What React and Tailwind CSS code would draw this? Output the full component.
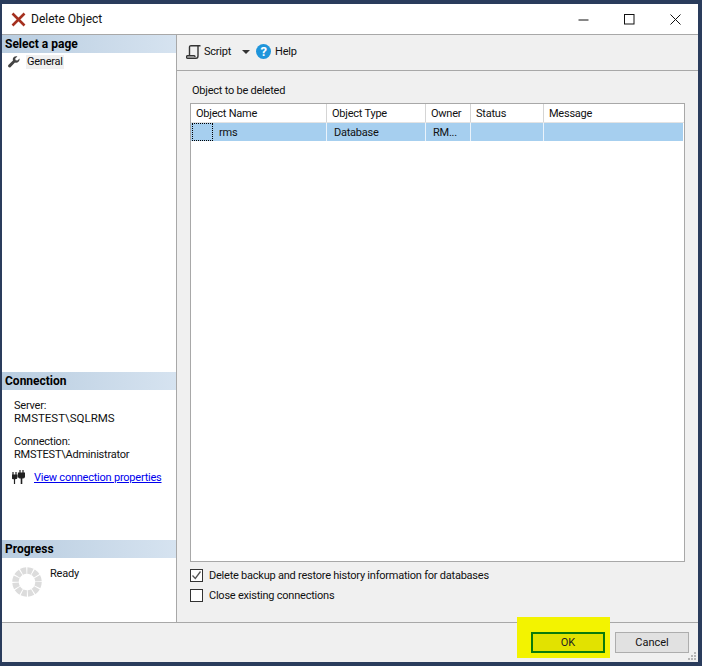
import React from 'react';

const font = "[font-family:Roboto,'Liberation_Sans',Arial,sans-serif]";

const columns = [
  { label: 'Object Name', width: 'w-[136px]', value: 'rms' },
  { label: 'Object Type', width: 'w-[99px]', value: 'Database' },
  { label: 'Owner', width: 'w-[45px]', value: 'RM...' },
  { label: 'Status', width: 'w-[73px]', value: '' },
  { label: 'Message', width: 'flex-1', value: '' },
];

function DeleteIcon() {
  return (
    <svg width="15" height="15" viewBox="0 0 15 15" className="shrink-0">
      <path d="M1.5 1.5 13.5 13.5M13.5 1.5 1.5 13.5" stroke="#a5301f" strokeWidth="2.6" />
    </svg>
  );
}

function WindowControls() {
  return (
    <div className="flex items-center ml-auto">
      <svg width="11" height="11" viewBox="0 0 11 11" className="mr-[35px]">
        <path d="M0.5 6h10" stroke="#111" strokeWidth="1" />
      </svg>
      <svg width="11" height="11" viewBox="0 0 11 11" className="mr-[35px]">
        <rect x="0.5" y="0.5" width="9.5" height="9.5" fill="none" stroke="#111" strokeWidth="1" />
      </svg>
      <svg width="11" height="11" viewBox="0 0 11 11" className="mr-[17px]">
        <path d="M0.5 0.5 10.5 10.5M10.5 0.5 0.5 10.5" stroke="#111" strokeWidth="1" />
      </svg>
    </div>
  );
}

function WrenchIcon() {
  return (
    <svg width="12" height="12" viewBox="0 0 12 12" className="shrink-0">
      <path
        d="M11.6 2.6 9.4 4.6 7.6 4.2 7.2 2.6 9.4.5C7.6-.2 5.6.6 5 2.2c-.3.8-.2 1.6 0 2.3L.6 8.8c-.7.7-.7 1.6-.1 2.2.6.6 1.5.6 2.2-.1L7 6.6c2.2.8 4.9-1 4.6-4Z"
        fill="#444"
      />
    </svg>
  );
}

function ScriptIcon() {
  return (
    <svg width="15" height="14" viewBox="0 0 15 14" className="shrink-0">
      <path
        d="M3.500 10.500V2.200C3.500 1.200 4.200.7 5 .7h9.500M12 .7v10c0 1.500-.7 2.600-2 2.600H1.500c-.7 0-1-.6-1-1.200 0-.8.5-1.300 1-1.300h6.700c.5 0 .8.6.8 1.300"
        fill="none"
        stroke="#333"
        strokeWidth="1.400"
      />
    </svg>
  );
}

function HelpIcon() {
  return (
    <div className="flex items-center justify-center w-[15px] h-[15px] rounded-full bg-[#1f95db] text-white text-[13px] leading-none font-bold">
      ?
    </div>
  );
}

function PlugIcon() {
  return (
    <svg width="13" height="14" viewBox="0 0 13 14" className="shrink-0">
      <path d="M8 0v3M11 0v3M6.500 3h6v3c0 1.200-1 2-2 2H9C7.600 8 6.500 7 6.500 6Z" stroke="#222" strokeWidth="1.200" fill="#222" />
      <path d="M9.500 8v6" stroke="#222" strokeWidth="1.600" />
      <path d="M1 2v3M4 2v3M0 5h5v2c0 1-.8 1.700-1.700 1.700H1.700C.8 8.700 0 8 0 7ZM2.500 8.500V14" stroke="#222" strokeWidth="1.200" fill="#222" />
    </svg>
  );
}

function Spinner() {
  return (
    <svg width="30" height="30" viewBox="0 0 30 30" className="shrink-0">
      <circle cx="15" cy="15" r="11.500" fill="none" stroke="#dcdcdc" strokeWidth="6.500" strokeDasharray="5 1.020" />
    </svg>
  );
}

function SectionHeader({ children }) {
  return (
    <div className="h-[18px] flex items-center pl-[3px] bg-gradient-to-r from-[#b9cde0] to-[#d6e3f0] text-[12px] font-bold tracking-normal text-black">
      {children}
    </div>
  );
}

function Checkbox({ checked, label }) {
  return (
    <label className="flex items-center gap-[6px] h-[20px]">
      <span className="flex items-center justify-center w-[13px] h-[13px] border border-[#333] bg-white">
        {checked && (
          <svg width="11" height="11" viewBox="0 0 11 11">
            <path d="M1.500 5.500 4.300 8.500 9.500 1.500" fill="none" stroke="#555" strokeWidth="1.300" />
          </svg>
        )}
      </span>
      <span className="pt-[1px]">{label}</span>
    </label>
  );
}

function Sidebar() {
  return (
    <aside className="w-[175px] shrink-0 flex flex-col bg-white border-r border-[#a8a8a8]">
      <SectionHeader>Select a page</SectionHeader>
      <div className="h-[319px] pl-[6px] pt-[1px]">
        <div className="flex items-center h-[15px]">
          <WrenchIcon />
          <span className="ml-[6px] px-[1px] bg-[#f0f0f0]">General</span>
        </div>
      </div>
      <SectionHeader>Connection</SectionHeader>
      <div className="h-[150px] pl-[12px] pt-[9px] leading-[13px]">
        <div>Server:</div>
        <div className="text-[11.5px] tracking-normal">RMSTEST\SQLRMS</div>
        <div className="mt-[10px]">Connection:</div>
        <div>RMSTEST\Administrator</div>
        <div className="flex items-center mt-[9px] ml-[-2px] gap-[9px] whitespace-nowrap">
          <PlugIcon />
          <a href="#" className="text-[#0000ee] underline">View connection properties</a>
        </div>
      </div>
      <SectionHeader>Progress</SectionHeader>
      <div className="flex flex-1 pl-[10px] pt-[9px]">
        <Spinner />
        <span className="ml-[8px]">Ready</span>
      </div>
    </aside>
  );
}

function ObjectGrid() {
  return (
    <div className="flex-1 flex flex-col bg-white border border-[#a8a8a8]">
      <div className="flex h-[19px] border-b border-[#e3e3e3]">
        {columns.map(col => (
          <div key={col.label} className={`${col.width} pl-[5px] pt-[1px] leading-[18px] border-r border-[#d5d5d5] last:border-r-0`}>
            {col.label}
          </div>
        ))}
      </div>
      <div className="flex h-[18px] mr-[1px] bg-[#a6cfef]">
        {columns.map((col, i) => (
          <div key={col.label} className={`${col.width} relative pt-[1px] leading-[17px] border-r border-[#eaf3fb] last:border-r-0 ${i === 0 ? 'pl-[28px]' : 'pl-[7px]'}`}>
            {i === 0 && (
              <span className="absolute left-[1px] top-0 w-[21px] h-[18px] border border-dotted border-black" />
            )}
            {col.value}
          </div>
        ))}
      </div>
    </div>
  );
}

export default function App() {
  return (
    <div className={`w-[702px] h-[666px] flex flex-col pt-[4px] pb-[4px] pl-[2px] pr-[4px] bg-[#2a3c5c] text-[11px] tracking-[-0.23px] leading-[14px] text-[#111] ${font}`}>
      <div className="h-[31px] flex items-center pl-[9px] bg-white border-b border-[#a8a8a8]">
        <DeleteIcon />
        <span className="ml-[5px] text-[12px] tracking-normal">Delete Object</span>
        <WindowControls />
      </div>
      <div className="flex flex-1 min-h-0">
        <Sidebar />
        <main className="flex-1 flex flex-col bg-[#f0f0f0]">
          <div className="h-[36px] flex items-center pl-[9px] pb-[2px] border-b border-[#a8a8a8]">
            <ScriptIcon />
            <span className="ml-[3px]">Script</span>
            <svg width="8" height="4" viewBox="0 0 8 4" className="ml-[11px]">
              <path d="M0 0h8L4 4Z" fill="#333" />
            </svg>
            <div className="ml-[6px]"><HelpIcon /></div>
            <span className="ml-[4px]">Help</span>
          </div>
          <div className="flex-1 flex flex-col pl-[13px] pr-[13px] pt-[12px] pb-[17px]">
            <div className="h-[20px] pl-[2px] pt-[1px]">Object to be deleted</div>
            <ObjectGrid />
            <div className="mt-[3px] flex flex-col">
              <Checkbox checked label="Delete backup and restore history information for databases" />
              <Checkbox label="Close existing connections" />
            </div>
          </div>
        </main>
      </div>
      <div className="h-[40px] relative flex items-center justify-end gap-[10px] pr-[9px] bg-[#f0f0f0] border-t border-[#a8a8a8] tracking-normal">
        <div className="absolute right-[88px] top-[-6px] w-[93px] h-[41px] bg-[#f3f300]" />
        <button className="relative w-[74px] h-[21px] bg-[#e2e200] border-[2px] border-[#0a7a0a] text-[#222]">OK</button>
        <button className="w-[74px] h-[21px] bg-[#e1e1e1] border border-[#adadad] text-[#111]">Cancel</button>
        <svg width="10" height="10" viewBox="0 0 10 10" className="absolute right-[1px] bottom-[1px]">
          <path d="M7 1h2v2H7ZM4 4h2v2H4ZM7 4h2v2H7ZM1 7h2v2H1ZM4 7h2v2H4ZM7 7h2v2H7Z" fill="#b5b5b5" />
        </svg>
      </div>
    </div>
  );
}
